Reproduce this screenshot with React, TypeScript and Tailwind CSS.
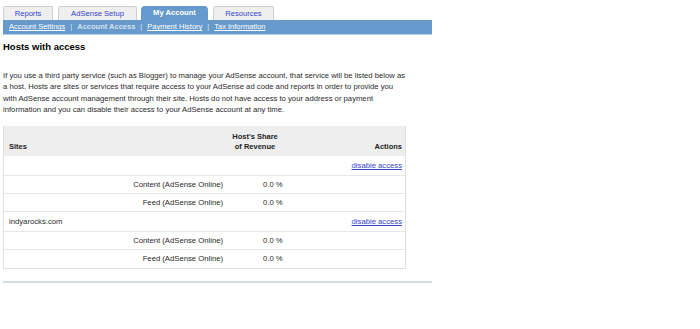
import React from "react";

const rows = [
  { kind: "site", name: "", h: "h-[19px]" },
  { kind: "sub", name: "Content (AdSense Online)", h: "h-[18px]" },
  { kind: "sub", name: "Feed (AdSense Online)", h: "h-[18px]" },
  { kind: "site", name: "indyarocks.com", h: "h-[20px]" },
  { kind: "sub", name: "Content (AdSense Online)", h: "h-[18px]" },
  { kind: "sub", name: "Feed (AdSense Online)", h: "h-[19px]" },
];

export default function App() {
  return (
    <div
      className="w-[700px] h-[329px] bg-white text-[#222] overflow-hidden"
      style={{ fontFamily: '"Liberation Sans", Arial, sans-serif' }}
    >
      <div className="ml-[3px] w-[429px] pt-[6px]">
        {/* Tabs */}
        <div className="flex items-end h-[14px] text-[7.6px]">
          <div className="w-[50px] h-[14px] mr-[5px] flex items-center justify-center bg-[#efefef] border border-b-0 border-[#cfcfcf] rounded-t-[2px] text-[#3344cc]">
            Reports
          </div>
          <div className="w-[79px] h-[14px] mr-[4px] flex items-center justify-center bg-[#efefef] border border-b-0 border-[#cfcfcf] rounded-t-[2px] text-[#3344cc]">
            AdSense Setup
          </div>
          <div className="w-[67px] h-[14px] mr-[5px] flex items-center justify-center bg-[#6699cc] rounded-t-[4px] text-white font-bold">
            My Account
          </div>
          <div className="w-[61px] h-[14px] flex items-center justify-center bg-[#efefef] border border-b-0 border-[#cfcfcf] rounded-t-[2px] text-[#3344cc]">
            Resources
          </div>
        </div>
        {/* Sub bar */}
        <div className="h-[14px] bg-[#6699cc] border-b border-[#b9cfe4] flex items-center pl-[6px] text-[7.5px] text-white box-content">
          <span className="underline">Account Settings</span>
          <span className="mx-[5px] text-[#dbe6f2]">|</span>
          <span className="font-bold text-[#d6e2ee]">Account Access</span>
          <span className="mx-[5px] text-[#dbe6f2]">|</span>
          <span className="underline">Payment History</span>
          <span className="mx-[5px] text-[#dbe6f2]">|</span>
          <span className="underline">Tax Information</span>
        </div>
        {/* Heading */}
        <div className="mt-[5px] h-[14px] flex items-center text-[9.5px] font-bold text-black">
          Hosts with access
        </div>
        {/* Paragraph */}
        <div className="mt-[16px] text-[7.7px] leading-[11.3px] text-[#2a2a2a]">
          <div className="whitespace-nowrap">
            If you use a third party service (such as Blogger) to manage your AdSense account, that service will be listed below as
          </div>
          <div className="whitespace-nowrap">
            a host. Hosts are sites or services that require access to your AdSense ad code and reports in order to provide you
          </div>
          <div className="whitespace-nowrap">
            with AdSense account management through their site. Hosts do not have access to your address or payment
          </div>
          <div className="whitespace-nowrap">
            information and you can disable their access to your AdSense account at any time.
          </div>
        </div>
        {/* Table */}
        <div className="mt-[11px] w-[403px] border-x border-b border-[#dedede] text-[7.7px] text-[#2a2a2a]">
          <div className="h-[30px] bg-[#eeeeee] flex font-bold text-[#222] text-[7.5px]">
            <div className="w-[223px] flex items-end pb-[4px] pl-[5px]">Sites</div>
            <div className="w-[56px] flex flex-col items-center justify-end pb-[4px] leading-[10px] text-center">
              <span>Host&apos;s Share</span>
              <span>of Revenue</span>
            </div>
            <div className="flex-1 flex items-end justify-end pb-[4px] pr-[3px]">Actions</div>
          </div>
          {rows.map((r, i) => (
            <div
              key={i}
              className={`${r.h} flex items-center ${i > 0 ? "border-t border-[#e6e6e6]" : ""}`}
            >
              {r.kind === "site" ? (
                <>
                  <div className="flex-1 pl-[5px]">{r.name}</div>
                  <div className="pr-[3px] text-[#3344cc] underline">disable access</div>
                </>
              ) : (
                <>
                  <div className="w-[219px] text-right">{r.name}</div>
                  <div className="ml-[40px]">0.0 %</div>
                </>
              )}
            </div>
          ))}
        </div>
        {/* Bottom line */}
        <div className="mt-[12px] h-[2px] bg-[#d3dde6]" />
      </div>
    </div>
  );
}
